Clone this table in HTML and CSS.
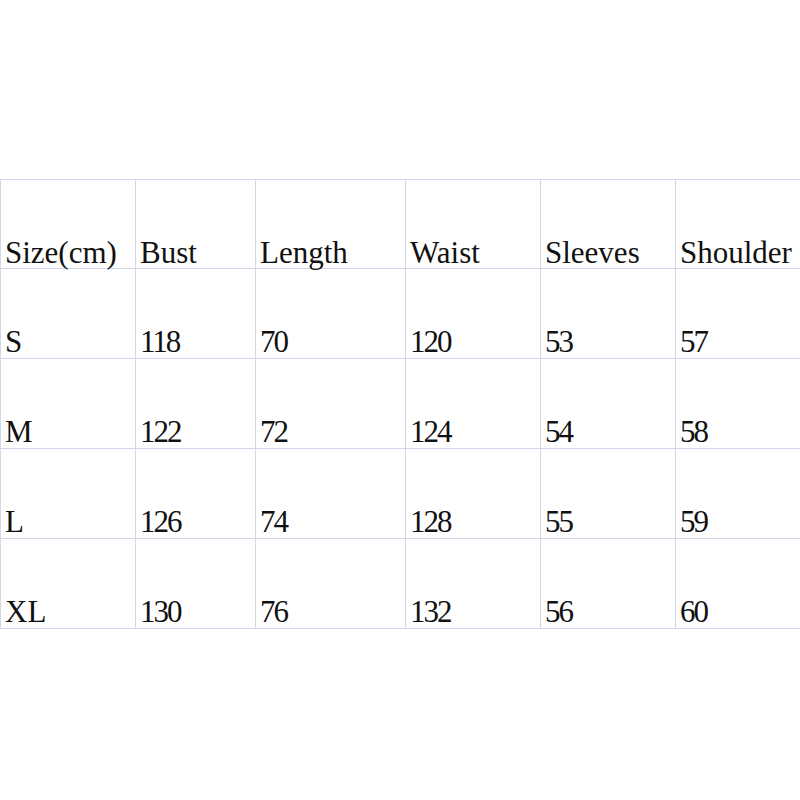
FILE: index.html
```html
<!DOCTYPE html>
<html>
<head>
<meta charset="utf-8">
<link rel="stylesheet" href="styles.css">
</head>
<body>
<div class="page">
  <table class="sizes">
    <colgroup>
      <col class="c1"><col class="c2"><col class="c3"><col class="c4"><col class="c5"><col class="c6">
    </colgroup>
    <tr class="head"><td>Size(cm)</td><td>Bust</td><td>Length</td><td>Waist</td><td>Sleeves</td><td>Shoulder</td></tr>
    <tr><td>S</td><td class="n">118</td><td class="n">70</td><td class="n">120</td><td class="n">53</td><td class="n">57</td></tr>
    <tr><td>M</td><td class="n">122</td><td class="n">72</td><td class="n">124</td><td class="n">54</td><td class="n">58</td></tr>
    <tr><td>L</td><td class="n">126</td><td class="n">74</td><td class="n">128</td><td class="n">55</td><td class="n">59</td></tr>
    <tr><td>XL</td><td class="n">130</td><td class="n">76</td><td class="n">132</td><td class="n">56</td><td class="n">60</td></tr>
  </table>
</div>
</body>
</html>
```
FILE: styles.css
```css
html, body {
  margin: 0;
  padding: 0;
  background: #fff;
  overflow: hidden;
}
.page {
  width: 800px;
  height: 800px;
  padding-top: 179px;
  box-sizing: border-box;
  overflow: hidden;
}
.sizes {
  border-collapse: collapse;
  table-layout: fixed;
  width: 830px;
  font-family: "Liberation Serif", serif;
  font-size: 31px;
  color: #111;
}
.c1 { width: 135px; }
.c2 { width: 120px; }
.c3 { width: 150px; }
.c4 { width: 135px; }
.c5 { width: 135px; }
.c6 { width: 155px; }
.sizes tr {
  height: 90px;
}
.sizes tr.head {
  height: 89px;
}
.sizes td {
  border: 1px solid #d4d6ea;
  padding: 0 0 1px 4px;
  vertical-align: bottom;
  line-height: 31px;
  white-space: nowrap;
}
.sizes .head td {
  padding-bottom: 0;
}
.sizes td.n {
  letter-spacing: -2px;
}
```
